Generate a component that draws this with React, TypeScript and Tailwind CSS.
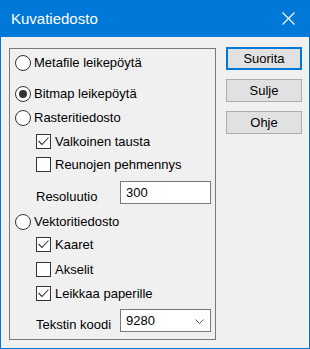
import type { ReactNode } from "react";

function Radio({ checked = false }: { checked?: boolean }) {
  return (
    <span className="w-[16px] h-[16px] shrink-0 rounded-full border border-[#333333] bg-white flex items-center justify-center">
      {checked && <span className="w-[8px] h-[8px] rounded-full bg-[#333333]" />}
    </span>
  );
}

function Check({ checked = false }: { checked?: boolean }) {
  return (
    <span className="w-[15px] h-[15px] shrink-0 border border-[#333333] bg-white flex items-center justify-center">
      {checked && (
        <svg width="13" height="13" viewBox="0 0 13 13" fill="none">
          <path d="M1.5 6 L5 9.5 L11.5 2.5" stroke="#333333" strokeWidth="1.1" />
        </svg>
      )}
    </span>
  );
}

function RadioRow({ label, checked, className }: { label: string; checked?: boolean; className: string }) {
  return (
    <div className={`flex items-center h-[16px] ml-[5px] ${className}`}>
      <Radio checked={checked} />
      <span className="ml-[3px] leading-[16px]">{label}</span>
    </div>
  );
}

function CheckRow({ label, checked, className }: { label: string; checked?: boolean; className: string }) {
  return (
    <div className={`flex items-center h-[15px] ml-[26px] ${className}`}>
      <Check checked={checked} />
      <span className="ml-[4px] leading-[16px]">{label}</span>
    </div>
  );
}

function FieldRow({ label, children, className }: { label: string; children: ReactNode; className: string }) {
  return (
    <div className={`flex items-start h-[23px] ${className}`}>
      <span className="w-[110px] shrink-0 whitespace-nowrap pl-[26px] mt-[8px] leading-[16px]">{label}</span>
      {children}
    </div>
  );
}

function Button({ label, primary }: { label: string; primary?: boolean }) {
  return (
    <button
      className={`w-[76px] h-[23px] bg-[#e1e1e1] flex items-center justify-center text-[13px] text-black ${
        primary ? "border-2 border-[#0078d7]" : "border border-[#adadad]"
      }`}
    >
      {label}
    </button>
  );
}

export default function App() {
  return (
    <div className="w-[310px] h-[349px] flex flex-col bg-[#f0f0f0] border-x border-b border-[#0078d7] font-['Liberation_Sans',Arial,sans-serif] text-[13px] text-black">
      <div className="h-[37px] shrink-0 bg-[#0078d7] flex items-center justify-between pl-[10px] pr-[14px]">
        <span className="text-white text-[15px] leading-[18px] pt-[1px]">Kuvatiedosto</span>
        <svg width="13" height="13" viewBox="0 0 13 13" fill="none">
          <path d="M0.5 0.5 L12.5 12.5 M12.5 0.5 L0.5 12.5" stroke="white" strokeWidth="1.1" />
        </svg>
      </div>

      <div className="flex items-start pt-[10px]">
        <div className="mt-[1px] ml-[8px] w-[207px] h-[292px] border border-[#7a7a7a] flex flex-col">
          <RadioRow label="Metafile leikepöytä" className="mt-[6px]" />
          <RadioRow label="Bitmap leikepöytä" checked className="mt-[15px]" />
          <RadioRow label="Rasteritiedosto" className="mt-[8px]" />
          <CheckRow label="Valkoinen tausta" checked className="mt-[8px]" />
          <CheckRow label="Reunojen pehmennys" className="mt-[8px]" />
          <FieldRow label="Resoluutio" className="mt-[9px]">
            <div className="w-[91px] h-[23px] border border-[#7a7a7a] bg-white flex items-center pl-[5px]">
              300
            </div>
          </FieldRow>
          <RadioRow label="Vektoritiedosto" className="mt-[10px]" />
          <CheckRow label="Kaaret" checked className="mt-[7px]" />
          <CheckRow label="Akselit" className="mt-[10px]" />
          <CheckRow label="Leikkaa paperille" checked className="mt-[9px]" />
          <FieldRow label="Tekstin koodi" className="mt-[8px]">
            <div className="w-[91px] h-[23px] border border-[#7a7a7a] bg-white flex items-center justify-between pl-[5px] pr-[6px]">
              <span>9280</span>
              <svg width="9" height="6" viewBox="0 0 9 6" fill="none" className="mt-[2px]">
                <path d="M0.5 0.5 L4.5 4.5 L8.5 0.5" stroke="#555555" strokeWidth="1" />
              </svg>
            </div>
          </FieldRow>
        </div>

        <div className="ml-[10px] flex flex-col gap-[9px]">
          <Button label="Suorita" primary />
          <Button label="Sulje" />
          <Button label="Ohje" />
        </div>
      </div>
    </div>
  );
}
